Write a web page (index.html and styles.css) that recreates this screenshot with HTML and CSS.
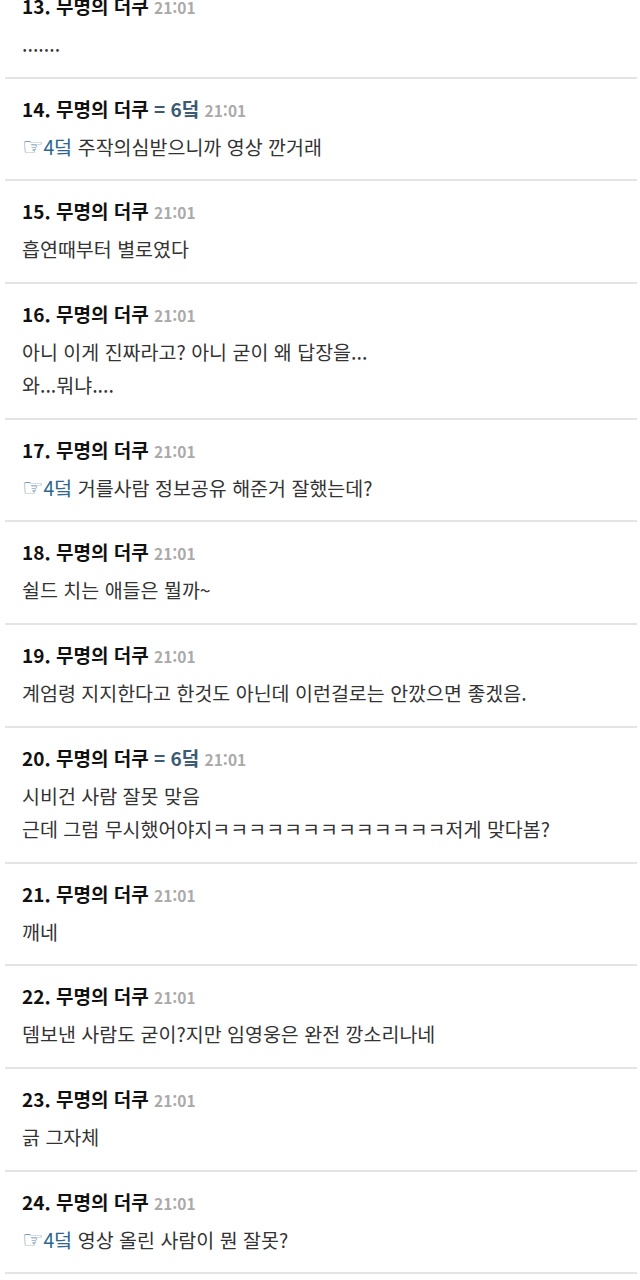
FILE: index.html
```html
<!DOCTYPE html>
<html lang="ko">
<head>
  <meta charset="utf-8">
  <title>댓글</title>
  <link rel="stylesheet" href="styles.css">
</head>
<body>

<!-- Comment list -->
<ul class="comments">
  <li class="comment">
    <div class="head"><span class="num">13.</span> 무명의 더쿠 <span class="time">21:01</span></div>
    <div class="body">.......</div>
  </li>
  <li class="comment">
    <div class="head"><span class="num">14.</span> 무명의 더쿠 <span class="ref">= 6덬</span> <span class="time">21:01</span></div>
    <div class="body"><a class="quote" href="#"><span class="hand">☞</span>4덬</a> 주작의심받으니까 영상 깐거래</div>
  </li>
  <li class="comment">
    <div class="head"><span class="num">15.</span> 무명의 더쿠 <span class="time">21:01</span></div>
    <div class="body">흡연때부터 별로였다</div>
  </li>
  <li class="comment">
    <div class="head"><span class="num">16.</span> 무명의 더쿠 <span class="time">21:01</span></div>
    <div class="body">아니 이게 진짜라고? 아니 굳이 왜 답장을...<br>와...뭐냐....</div>
  </li>
  <li class="comment">
    <div class="head"><span class="num">17.</span> 무명의 더쿠 <span class="time">21:01</span></div>
    <div class="body"><a class="quote" href="#"><span class="hand">☞</span>4덬</a> 거를사람 정보공유 해준거 잘했는데?</div>
  </li>
  <li class="comment">
    <div class="head"><span class="num">18.</span> 무명의 더쿠 <span class="time">21:01</span></div>
    <div class="body">쉴드 치는 애들은 뭘까~</div>
  </li>
  <li class="comment">
    <div class="head"><span class="num">19.</span> 무명의 더쿠 <span class="time">21:01</span></div>
    <div class="body">계엄령 지지한다고 한것도 아닌데 이런걸로는 안깠으면 좋겠음.</div>
  </li>
  <li class="comment">
    <div class="head"><span class="num">20.</span> 무명의 더쿠 <span class="ref">= 6덬</span> <span class="time">21:01</span></div>
    <div class="body">시비건 사람 잘못 맞음<br>근데 그럼 무시했어야지ㅋㅋㅋㅋㅋㅋㅋㅋㅋㅋㅋㅋㅋ저게 맞다봄?</div>
  </li>
  <li class="comment">
    <div class="head"><span class="num">21.</span> 무명의 더쿠 <span class="time">21:01</span></div>
    <div class="body">깨네</div>
  </li>
  <li class="comment">
    <div class="head"><span class="num">22.</span> 무명의 더쿠 <span class="time">21:01</span></div>
    <div class="body">뎀보낸 사람도 굳이?지만 임영웅은 완전 깡소리나네</div>
  </li>
  <li class="comment">
    <div class="head"><span class="num">23.</span> 무명의 더쿠 <span class="time">21:01</span></div>
    <div class="body">긁 그자체</div>
  </li>
  <li class="comment">
    <div class="head"><span class="num">24.</span> 무명의 더쿠 <span class="time">21:01</span></div>
    <div class="body"><a class="quote" href="#"><span class="hand">☞</span>4덬</a> 영상 올린 사람이 뭔 잘못?</div>
  </li>
</ul>

</body>
</html>
```

FILE: styles.css
```css
/* Page */
body {
  margin: 0;
  background: #fff;
  font-family: "Noto Sans CJK KR", "Noto Sans", sans-serif;
  color: #222;
}
/* Comment list, cropped from the middle of a thread */
.comments {
  list-style: none;
  margin: -24px 3px 0 5px;
  padding: 0;
}
.comment {
  padding: 16px 17px 16.7px;
  border-bottom: 2px solid #e4e4e4;
}
.head {
  height: 28px;
  font-size: 19px;
  font-weight: bold;
  line-height: 28px;
  color: #111;
  white-space: nowrap;
}
.head .ref {
  color: #3b5a73;
}
.head .time {
  font-size: 15.5px;
  line-height: 1;
  color: #aaa;
}
.body {
  margin-top: 7px;
  font-size: 19.5px;
  line-height: 33px;
  color: #333;
}
.quote {
  color: #2f6690;
  text-decoration: none;
}
.quote .hand {
  font-family: "DejaVu Sans", sans-serif;
  font-size: 24px;
  line-height: 1;
  color: #5d86a8;
}
```
